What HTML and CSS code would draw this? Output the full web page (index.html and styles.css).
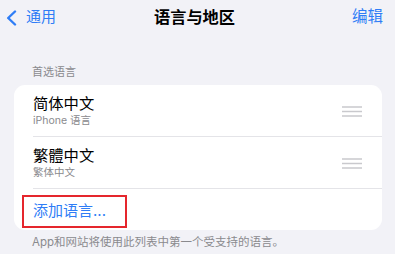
FILE: index.html
```html
<!DOCTYPE html>
<html lang="zh-CN">
<head>
<meta charset="utf-8">
<link rel="stylesheet" href="styles.css">
</head>
<body>
<div class="nav">
  <div class="back">
    <svg class="chev" width="11" height="16" viewBox="0 0 11 16"><polyline points="9,1.5 2.2,8 9,14.5" fill="none" stroke="#2f7df6" stroke-width="2.4" stroke-linecap="round" stroke-linejoin="round"/></svg>
    <span>通用</span>
  </div>
  <div class="title">语言与地区</div>
  <div class="edit">编辑</div>
</div>
<div class="section-header">首选语言</div>
<div class="card">
  <div class="row">
    <div class="texts">
      <div class="main">简体中文</div>
      <div class="sub">iPhone 语言</div>
    </div>
    <svg class="handle" width="20" height="11" viewBox="0 0 20 11"><g stroke="#c9c9cd" stroke-width="1.5"><line x1="0" y1="1" x2="20" y2="1"/><line x1="0" y1="5.5" x2="20" y2="5.5"/><line x1="0" y1="10" x2="20" y2="10"/></g></svg>
  </div>
  <div class="row">
    <div class="texts">
      <div class="main">繁體中文</div>
      <div class="sub">繁体中文</div>
    </div>
    <svg class="handle" width="20" height="11" viewBox="0 0 20 11"><g stroke="#c9c9cd" stroke-width="1.5"><line x1="0" y1="1" x2="20" y2="1"/><line x1="0" y1="5.5" x2="20" y2="5.5"/><line x1="0" y1="10" x2="20" y2="10"/></g></svg>
  </div>
  <div class="add">
    <span class="add-text">添加语言...</span>
    <div class="highlight"></div>
  </div>
</div>
<div class="footer">App和网站将使用此列表中第一个受支持的语言。</div>
</body>
</html>
```
FILE: styles.css
```css
* { box-sizing: border-box; }
html, body {
  margin: 0;
  padding: 0;
  background: #f2f2f7;
  font-family: "Inter", "Noto Sans CJK SC", sans-serif;
  color: #000;
}
.nav {
  display: grid;
  grid-template-columns: 1fr auto 1fr;
  align-items: center;
  height: 34px;
  padding: 0 12px 0 6px;
}
.back {
  display: flex;
  align-items: center;
  gap: 9px;
  color: #2f7df6;
  font-size: 15px;
  line-height: 18px;
}
.chev { display: block; margin-top: 1px; }
.title {
  font-size: 16.2px;
  font-weight: 700;
  line-height: 18px;
}
.edit {
  justify-self: end;
  color: #2f7df6;
  font-size: 15.5px;
  line-height: 18px;
}
.section-header {
  margin: 31px 0 6px 32px;
  font-size: 11px;
  line-height: 14px;
  color: #8a8a8e;
}
.card {
  margin: 0 13px 0 14px;
  background: #fff;
  border-radius: 11px;
  overflow: hidden;
}
.row {
  display: flex;
  align-items: center;
  justify-content: space-between;
  margin-left: 19px;
  padding: 10px 20px 8px 0;
  border-bottom: 1px solid #e4e4e8;
}
.main {
  font-size: 15.3px;
  line-height: 18px;
}
.sub {
  font-size: 10.5px;
  line-height: 14px;
  color: #8a8a8e;
  margin-top: 1px;
}
.handle { display: block; }
.add {
  position: relative;
  padding: 12px 19px 9px;
}
.add-text {
  display: block;
  color: #2f7df6;
  font-size: 15px;
  line-height: 20px;
}
.highlight {
  position: absolute;
  left: 8px;
  top: 6px;
  width: 105px;
  height: 33px;
  border: 2px solid #e5262d;
}
.footer {
  margin: 5px 0 0 32px;
  font-size: 11.5px;
  line-height: 14px;
  color: #8a8a8e;
}
```
